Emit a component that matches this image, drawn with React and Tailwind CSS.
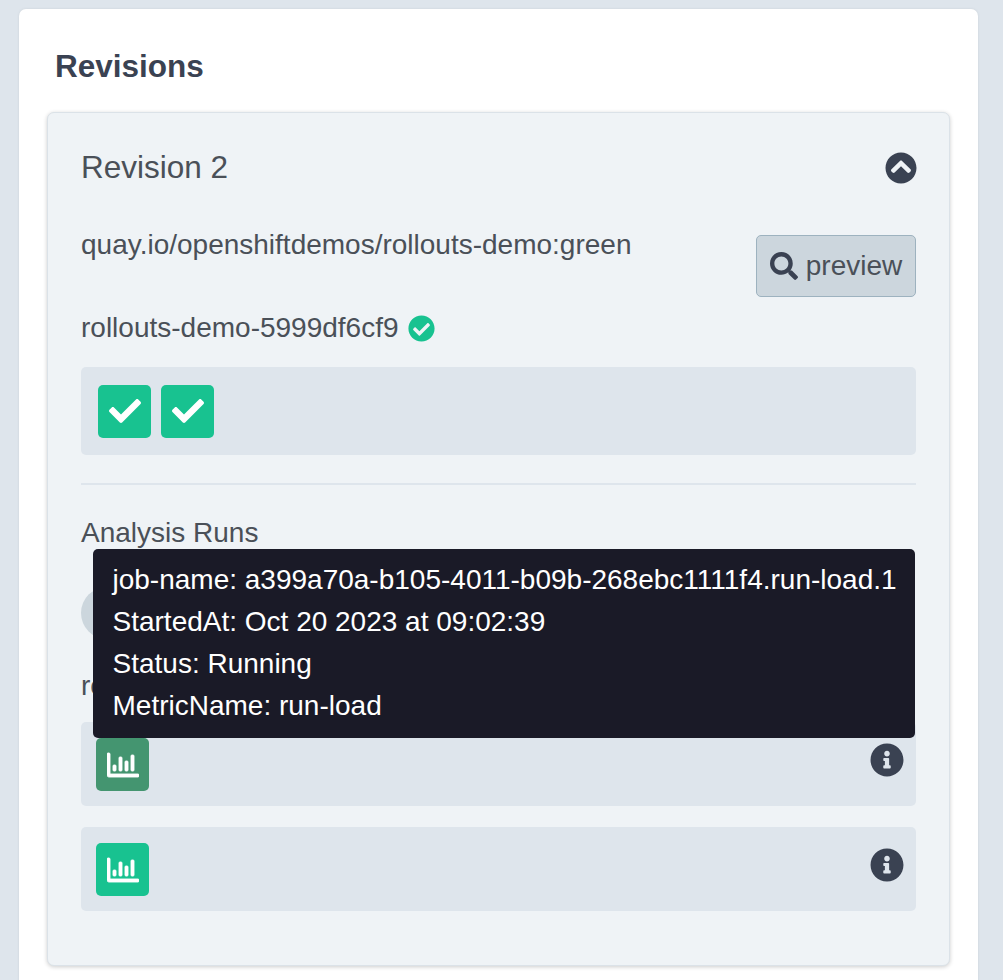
import { FaCheck, FaCheckCircle, FaChevronCircleUp, FaInfoCircle, FaRegChartBar, FaSearch } from "react-icons/fa";

const tooltipLines = [
  "job-name: a399a70a-b105-4011-b09b-268ebc1111f4.run-load.1",
  "StartedAt: Oct 20 2023 at 09:02:39",
  "Status: Running",
  "MetricName: run-load",
];

function PodIcon() {
  return (
    <div className="w-[53px] h-[53px] rounded-[5px] bg-[#18c290] flex items-center justify-center text-white">
      <FaCheck className="w-[32px] h-[32px]" />
    </div>
  );
}

function JobRow({ color }) {
  return (
    <div className="h-[84px] rounded-[5px] bg-[#dee5ec] pl-[15px] pr-[12px] pt-[16px] flex justify-between items-start">
      <div className={`w-[53px] h-[53px] rounded-[5px] ${color} flex items-center justify-center text-white`}>
        <FaRegChartBar strokeWidth={14} className="w-[32px] h-[32px]" />
      </div>
      <FaInfoCircle className="w-[34px] h-[34px] mt-[5px] text-[#3a4252]" />
    </div>
  );
}

export default function App() {
  return (
    <div className="h-[980px] overflow-hidden bg-[#dee5ec] pt-[9px] pl-[19px] pr-[25px] font-['Liberation_Sans',Arial,sans-serif] text-[#4a5058]">
      <div className="h-[1100px] rounded-[7px] bg-white px-[28px] pt-[37px] shadow-[0_0_3px_rgba(0,0,0,0.08)]">
        <h2 className="ml-[8px] text-[31.5px] leading-[40px] font-bold text-[#3a4252]">Revisions</h2>
        <div className="relative mt-[26px] h-[854px] rounded-[7px] border border-[#dbe2e8] bg-[#eff3f6] px-[33px] pt-[35px] shadow-[0_1px_4px_rgba(0,0,0,0.2)]">
          <div className="flex items-center justify-between h-[40px]">
            <span className="text-[31.5px]">Revision 2</span>
            <FaChevronCircleUp className="w-[32px] h-[32px] mr-[-1px] text-[#3a4252]" />
          </div>
          <div className="mt-[36px] flex justify-between items-start h-[73px]">
            <span className="text-[28px] leading-[42px]">quay.io/openshiftdemos/rollouts-demo:green</span>
            <button className="mt-[11px] w-[160px] h-[62px] rounded-[5px] border border-[#9db2bf] bg-[#ccd6dd] flex items-center justify-center gap-[8px] text-[28px] text-[#4a5058]">
              <FaSearch className="w-[28px] h-[28px] text-[#3a4252]" />
              preview
            </button>
          </div>
          <div className="mt-[11px] flex items-center gap-[9px] h-[40px] text-[28px]">
            rollouts-demo-5999df6cf9
            <FaCheckCircle className="w-[27px] h-[27px] text-[#18c290]" />
          </div>
          <div className="mt-[19px] h-[88px] rounded-[5px] bg-[#dee5ec] pl-[17px] flex items-center gap-[10px]">
            <PodIcon />
            <PodIcon />
          </div>
          <div className="mt-[28px] border-t-2 border-[#dee5ec]" />
          <div className="mt-[28px] text-[28px] leading-[40px]">Analysis Runs</div>
          <div className="mt-[34px] w-[52px] h-[52px] rounded-full bg-[#ccd6dd]" />
          <div className="mt-[27px] text-[28px] leading-[40px]">rollouts-demo</div>
          <div className="mt-[16px] flex flex-col gap-[21px]">
            <JobRow color="bg-[#449570]" />
            <JobRow color="bg-[#18c290]" />
          </div>
          <div className="absolute left-[45px] top-[436px] w-[822px] h-[189px] rounded-[5px] bg-[#1a1a27] pl-[19.5px] py-[10px] text-white text-[28px] leading-[42px] whitespace-nowrap">
            {tooltipLines.map((line) => (
              <div key={line}>{line}</div>
            ))}
          </div>
        </div>
      </div>
    </div>
  );
}
